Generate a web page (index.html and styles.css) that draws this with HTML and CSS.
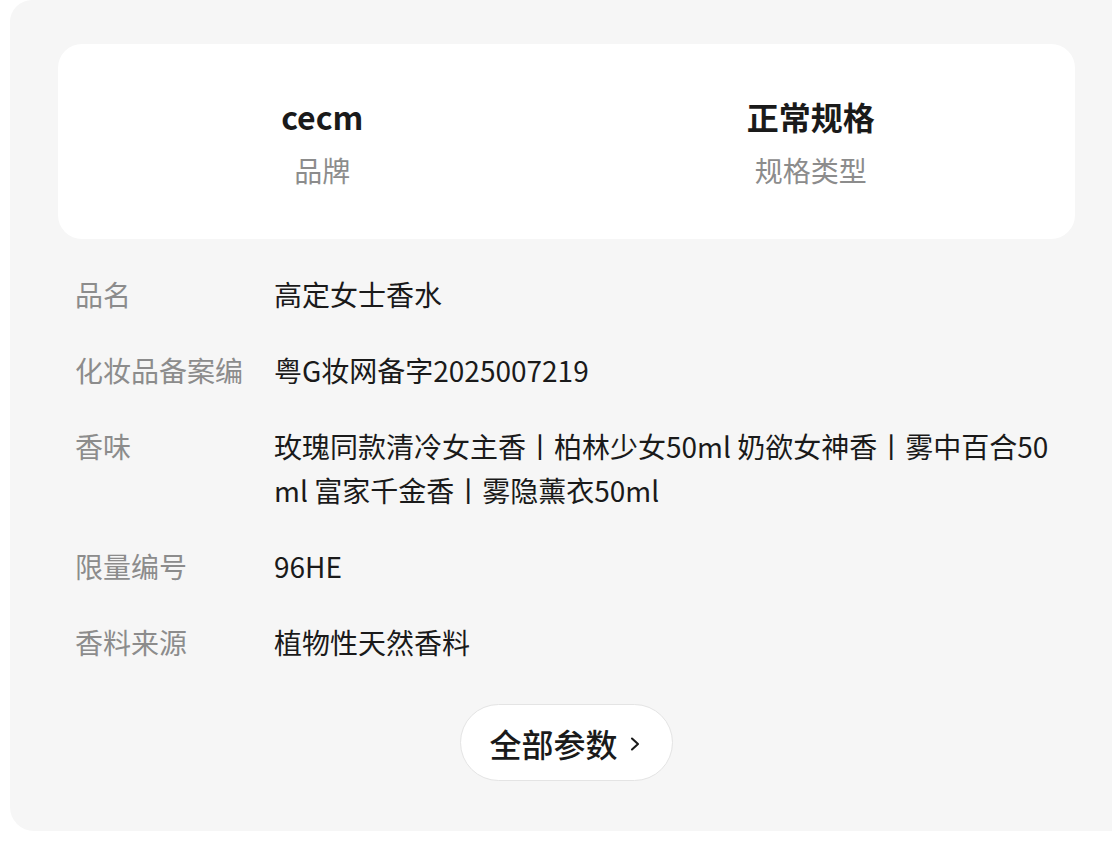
FILE: index.html
```html
<!DOCTYPE html>
<html lang="zh">
<head>
<meta charset="utf-8">
<link rel="stylesheet" href="styles.css">
</head>
<body>
<div class="panel">
  <div class="summary">
    <div class="summary-item">
      <div class="summary-value">cecm</div>
      <div class="summary-label">品牌</div>
    </div>
    <div class="summary-item">
      <div class="summary-value">正常规格</div>
      <div class="summary-label">规格类型</div>
    </div>
  </div>
  <div class="params">
    <div class="param-label">品名</div>
    <div class="param-value">高定女士香水</div>
    <div class="param-label">化妆品备案编</div>
    <div class="param-value">粤G妆网备字2025007219</div>
    <div class="param-label">香味</div>
    <div class="param-value">玫瑰同款清冷女主香丨柏林少女50ml 奶欲女神香丨雾中百合50ml 富家千金香丨雾隐薰衣50ml</div>
    <div class="param-label">限量编号</div>
    <div class="param-value">96HE</div>
    <div class="param-label">香料来源</div>
    <div class="param-value">植物性天然香料</div>
  </div>
  <div class="more-wrap">
    <button class="more-btn">
      <span>全部参数</span>
      <svg class="chev" width="10" height="14" viewBox="0 0 10 14"><path d="M2 1.5 L8 7 L2 12.5" fill="none" stroke="#1a1a1a" stroke-width="2.1" stroke-linecap="round" stroke-linejoin="round"/></svg>
    </button>
  </div>
</div>
</body>
</html>
```
FILE: styles.css
```css
html, body {
  margin: 0;
  padding: 0;
  background: #ffffff;
  overflow: hidden;
}
body {
  font-family: "Noto Sans CJK SC", "Noto Sans", sans-serif;
  width: 1112px;
  height: 848px;
}
.panel {
  box-sizing: border-box;
  margin-left: 10px;
  width: 1113px;
  background: #f6f6f6;
  border-radius: 22px 0 0 24px;
  padding: 44px 48px 50px 48px;
}
.summary {
  box-sizing: border-box;
  height: 195px;
  background: #ffffff;
  border-radius: 24px;
  display: flex;
  padding: 50px 20px 0 20px;
}
.summary-item {
  flex: 1;
  display: flex;
  flex-direction: column;
  align-items: center;
}
.summary-value {
  font-size: 32px;
  line-height: 44px;
  font-weight: 700;
  color: #1a1a1a;
}
.summary-label {
  margin-top: 12px;
  font-size: 28px;
  line-height: 40px;
  color: #8c8c8c;
}
.params {
  margin-top: 33px;
  padding: 0 17px;
  display: grid;
  grid-template-columns: 199px 1fr;
  row-gap: 32px;
  font-size: 28px;
  line-height: 44px;
}
.param-label {
  color: #8c8c8c;
  white-space: nowrap;
  overflow: hidden;
}
.param-value {
  color: #1a1a1a;
  word-break: break-all;
}
.more-wrap {
  margin-top: 40px;
  display: flex;
  justify-content: center;
}
.more-btn {
  box-sizing: border-box;
  width: 213px;
  height: 77px;
  border: 1.5px solid #e4e4e4;
  border-radius: 39px;
  background: #ffffff;
  display: flex;
  align-items: center;
  justify-content: center;
  gap: 12px;
  font-family: inherit;
  font-size: 32px;
  font-weight: 500;
  color: #1a1a1a;
  padding: 0 4px 0 0;
}
.chev {
  display: block;
  margin-top: 2px;
}
```
